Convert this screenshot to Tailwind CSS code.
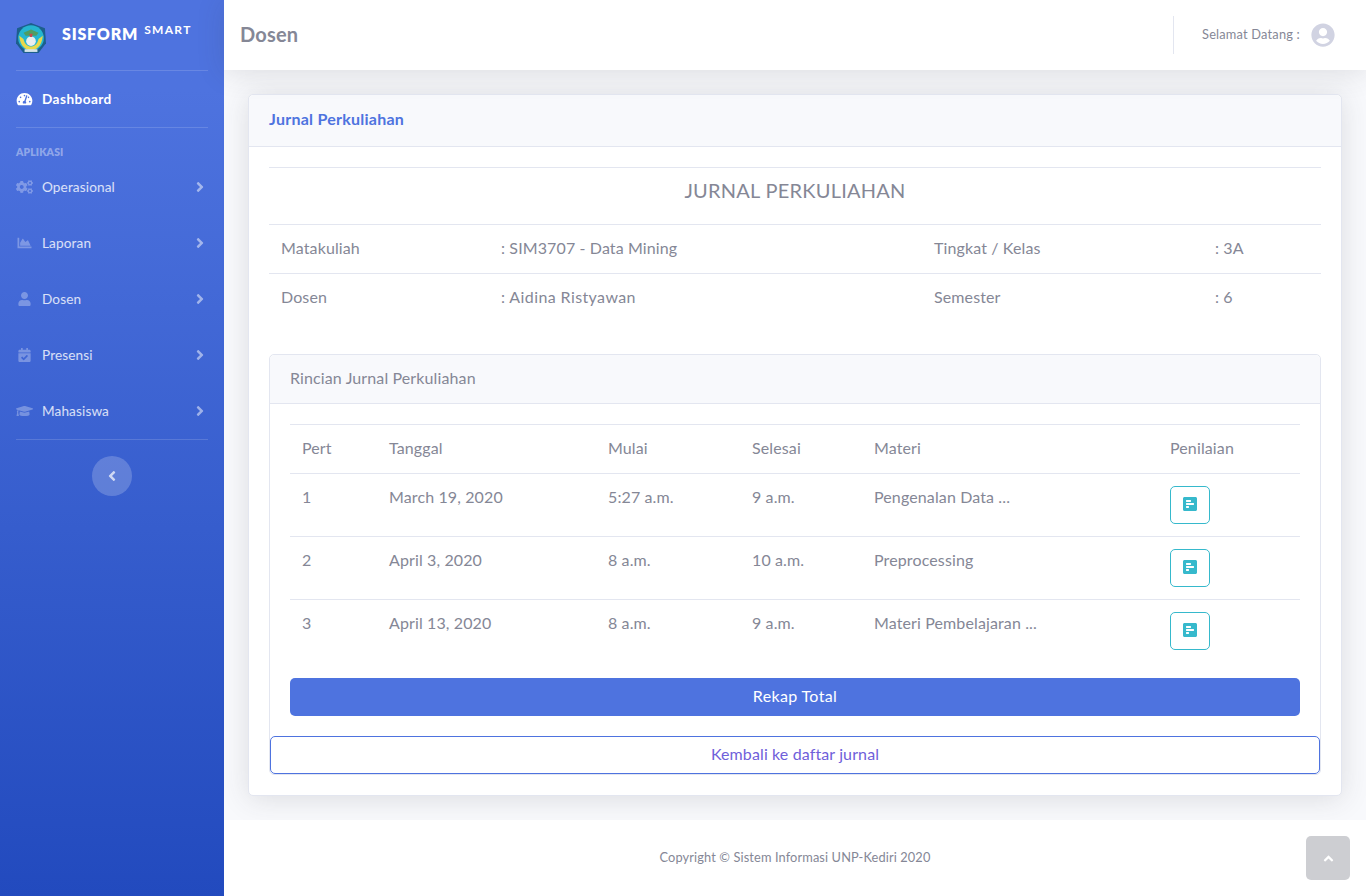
<!DOCTYPE html>
<html lang="en">
<head>
    <meta charset="UTF-8">
    <title>Dosen</title>
    <script src="https://cdn.jsdelivr.net/npm/@tailwindcss/browser@4"></script>
</head>
<body class="relative h-[896px] overflow-hidden bg-[#f8f9fc] font-['Lato','Liberation_Sans',sans-serif] text-base tracking-[0.12px] text-[#858796]">
<div class="flex h-[896px]">

    <!-- Sidebar -->
    <aside class="w-[224px] shrink-0 bg-gradient-to-b from-[#4e73df] from-10% to-[#224abe] px-4 text-[13.6px] text-white/80">
        <div class="flex h-[71px] items-center border-b border-white/15">
            <svg viewBox="2 1 28 28" class="mt-[6px] h-[30px] w-[30px] shrink-0">
                <path d="M16 1 L29 6 L30 20 L23 29 L9 29 L2 20 L3 6 Z" fill="#1c5f8c"/>
                <circle cx="16" cy="15" r="12" fill="#25b5d0"/>
                <path d="M5 13 C6 24 12 26 16 27 C20 26 26 24 27 13 L23 16 C22 21 19 23 16 23 C13 23 10 21 9 16 Z" fill="#e8d84a"/>
                <circle cx="16" cy="18" r="4.5" fill="#e8eeee"/>
                <path d="M9 10 L16 7 L23 10 L21 13 L11 13 Z" fill="#4f9d63"/>
                <path d="M14.5 11 L17.5 11 L17 14 L15 14 Z" fill="#c9474c"/>
                <rect x="10" y="25.5" width="12" height="2.5" fill="#d5e4ea"/>
            </svg>
            <span class="mb-[3px] ml-4 text-[16px] font-extrabold tracking-[0.8px] text-white">SISFORM</span>
            <span class="mb-[10px] ml-[6px] text-[12px] font-bold tracking-[1.3px] text-white">SMART</span>
        </div>

        <a class="flex h-[57px] items-center border-b border-white/15 font-bold tracking-[0.45px] text-white">
            <svg viewBox="0 0 576 512" class="mr-[9px] h-[14px] w-[17px] shrink-0 fill-white"><path d="M288 32C128.94 32 0 160.94 0 320c0 52.8 14.25 102.26 39.06 144.8 5.61 9.62 16.3 15.2 27.44 15.2h443c11.14 0 21.83-5.58 27.44-15.2C561.75 422.26 576 372.8 576 320c0-159.06-128.94-288-288-288zm0 64c14.71 0 26.58 10.13 30.32 23.65-1.11 2.26-2.64 4.23-3.45 6.67l-9.22 27.67c-5.13 3.49-10.97 6.01-17.64 6.01-17.67 0-32-14.33-32-32S270.33 96 288 96zM96 384c-17.67 0-32-14.33-32-32s14.33-32 32-32 32 14.33 32 32-14.33 32-32 32zm48-160c-17.67 0-32-14.33-32-32s14.33-32 32-32 32 14.33 32 32-14.33 32-32 32zm246.77-72.41l-61.33 184C343.13 347.33 352 364.54 352 384c0 11.72-3.38 22.55-8.88 32H232.88c-5.5-9.45-8.88-20.28-8.88-32 0-33.94 26.5-61.43 59.9-63.59l61.34-184.01c4.17-12.56 17.73-19.45 30.36-15.17 12.57 4.19 19.35 17.79 15.17 30.36zm14.66 57.2l15.52-46.55c3.47-1.29 7.13-2.23 11.05-2.23 17.67 0 32 14.33 32 32s-14.33 32-32 32c-11.38-.01-20.89-6.28-26.57-15.22zM480 384c-17.67 0-32-14.33-32-32s14.33-32 32-32 32 14.33 32 32-14.33 32-32 32z"/></svg>
            Dashboard
        </a>

        <div class="flex h-[31px] items-end text-[10.4px] leading-[14px] font-extrabold text-white/40">APLIKASI</div>

        <a class="flex h-[56px] items-center pr-1">
            <svg viewBox="0 0 640 512" class="mr-[9px] h-[14px] w-[17px] shrink-0 fill-white/30"><path d="M512.1 191l-8.2 14.3c-3 5.3-9.4 7.5-15.1 5.4-11.8-4.4-22.6-10.7-32.1-18.6-4.6-3.8-5.8-10.5-2.8-15.7l8.2-14.3c-6.9-8-12.3-17.3-15.9-27.4h-16.5c-6 0-11.2-4.3-12.2-10.3-2-12-2.1-24.6 0-37.1 1-6 6.2-10.4 12.2-10.4h16.5c3.6-10.1 9-19.4 15.9-27.4l-8.2-14.3c-3-5.2-1.9-11.9 2.8-15.7 9.5-7.9 20.4-14.2 32.1-18.6 5.7-2.1 12.1.1 15.1 5.4l8.2 14.3c10.5-1.9 21.2-1.9 31.7 0L552 6.3c3-5.3 9.4-7.5 15.1-5.4 11.8 4.4 22.6 10.7 32.1 18.6 4.6 3.8 5.8 10.5 2.8 15.7l-8.2 14.3c6.9 8 12.3 17.3 15.9 27.4h16.5c6 0 11.2 4.3 12.2 10.3 2 12 2.1 24.6 0 37.1-1 6-6.2 10.4-12.2 10.4h-16.5c-3.6 10.1-9 19.4-15.9 27.4l8.2 14.3c3 5.2 1.9 11.9-2.8 15.7-9.5 7.9-20.4 14.2-32.1 18.6-5.7 2.1-12.1-.1-15.1-5.4l-8.2-14.3c-10.4 1.9-21.2 1.9-31.7 0zm-10.5-58.8c38.5 29.6 82.4-14.3 52.8-52.8-38.5-29.7-82.4 14.3-52.8 52.8zM386.3 286.1l33.7 16.8c10.1 5.8 14.5 18.1 10.5 29.1-8.9 24.2-26.4 46.4-42.6 65.8-7.4 8.9-20.2 11.1-30.3 5.3l-29.1-16.8c-16 13.7-34.6 24.6-54.9 31.7v33.6c0 11.6-8.3 21.6-19.7 23.6-24.6 4.2-50.4 4.4-75.9 0-11.5-2-20-11.9-20-23.6V418c-20.3-7.2-38.9-18-54.9-31.7L74 403c-10 5.8-22.9 3.6-30.3-5.3-16.2-19.4-33.3-41.6-42.2-65.7-4-10.9.4-23.2 10.5-29.1l33.3-16.8c-3.9-20.9-3.9-42.4 0-63.4L12 205.8c-10.1-5.8-14.6-18.1-10.5-29 8.9-24.2 26-46.4 42.2-65.8 7.4-8.9 20.2-11.1 30.3-5.3l29.1 16.8c16-13.7 34.6-24.6 54.9-31.7V57.1c0-11.5 8.2-21.5 19.6-23.5 24.6-4.2 50.5-4.4 76-.1 11.5 2 20 11.9 20 23.6v33.6c20.3 7.2 38.9 18 54.9 31.7l29.1-16.8c10-5.8 22.9-3.6 30.3 5.3 16.2 19.4 33.2 41.6 42.1 65.8 4 10.9.1 23.2-10 29.1l-33.7 16.8c3.9 21 3.9 42.5 0 63.5zm-117.6 21.1c59.2-77-28.7-164.9-105.7-105.7-59.2 77 28.7 164.9 105.7 105.7zm243.4 182.7l-8.2 14.3c-3 5.3-9.4 7.5-15.1 5.4-11.8-4.4-22.6-10.7-32.1-18.6-4.6-3.8-5.8-10.5-2.8-15.7l8.2-14.3c-6.9-8-12.3-17.3-15.9-27.4h-16.5c-6 0-11.2-4.3-12.2-10.3-2-12-2.1-24.6 0-37.1 1-6 6.2-10.4 12.2-10.4h16.5c3.6-10.1 9-19.4 15.9-27.4l-8.2-14.3c-3-5.2-1.9-11.9 2.8-15.7 9.5-7.9 20.4-14.2 32.1-18.6 5.7-2.1 12.1.1 15.1 5.4l8.2 14.3c10.5-1.9 21.2-1.9 31.7 0l8.2-14.3c3-5.3 9.4-7.5 15.1-5.4 11.8 4.4 22.6 10.7 32.1 18.6 4.6 3.8 5.8 10.5 2.8 15.7l-8.2 14.3c6.9 8 12.3 17.3 15.9 27.4h16.5c6 0 11.2 4.3 12.2 10.3 2 12 2.1 24.6 0 37.1-1 6-6.2 10.4-12.2 10.4h-16.5c-3.6 10.1-9 19.4-15.9 27.4l8.2 14.3c3 5.2 1.9 11.9-2.8 15.7-9.5 7.9-20.4 14.2-32.1 18.6-5.7 2.1-12.1-.1-15.1-5.4l-8.2-14.3c-10.4 1.9-21.2 1.9-31.7 0zM501.6 431c38.5 29.6 82.4-14.3 52.8-52.8-38.5-29.6-82.4 14.3-52.8 52.8z"/></svg>
            <span class="flex-1">Operasional</span>
            <svg viewBox="0 0 256 512" class="h-4 w-2 fill-white/50"><path d="M224.3 273l-136 136c-9.4 9.4-24.6 9.4-33.9 0l-22.6-22.6c-9.4-9.4-9.4-24.6 0-33.9l96.4-96.4-96.4-96.4c-9.4-9.4-9.4-24.6 0-33.9L54.3 103c9.4-9.4 24.6-9.4 33.9 0l136 136c9.5 9.4 9.5 24.6.1 34z"/></svg>
        </a>
        <a class="flex h-[56px] items-center pr-1">
            <svg viewBox="0 0 512 512" class="mr-[9px] h-[14px] w-[17px] shrink-0 fill-white/30"><path d="M500 384c6.6 0 12 5.4 12 12v40c0 6.6-5.4 12-12 12H12c-6.6 0-12-5.4-12-12V76c0-6.6 5.4-12 12-12h40c6.6 0 12 5.4 12 12v308h436zM372.7 159.5L288 216l-85.3-113.7c-5.1-6.8-15.5-6.3-19.9 1L96 248v104h384l-89.9-187.8c-3.2-6.5-11.4-8.7-17.4-4.7z"/></svg>
            <span class="flex-1">Laporan</span>
            <svg viewBox="0 0 256 512" class="h-4 w-2 fill-white/50"><path d="M224.3 273l-136 136c-9.4 9.4-24.6 9.4-33.9 0l-22.6-22.6c-9.4-9.4-9.4-24.6 0-33.9l96.4-96.4-96.4-96.4c-9.4-9.4-9.4-24.6 0-33.9L54.3 103c9.4-9.4 24.6-9.4 33.9 0l136 136c9.5 9.4 9.5 24.6.1 34z"/></svg>
        </a>
        <a class="flex h-[56px] items-center pr-1">
            <svg viewBox="0 0 448 512" class="mr-[9px] h-[14px] w-[17px] shrink-0 fill-white/30"><path d="M224 256c70.7 0 128-57.3 128-128S294.7 0 224 0 96 57.3 96 128s57.3 128 128 128zm89.6 32h-16.7c-22.2 10.2-46.9 16-72.9 16s-50.6-5.8-72.9-16h-16.7C60.2 288 0 348.2 0 422.4V464c0 26.5 21.5 48 48 48h352c26.5 0 48-21.5 48-48v-41.6c0-74.2-60.2-134.4-134.4-134.4z"/></svg>
            <span class="flex-1">Dosen</span>
            <svg viewBox="0 0 256 512" class="h-4 w-2 fill-white/50"><path d="M224.3 273l-136 136c-9.4 9.4-24.6 9.4-33.9 0l-22.6-22.6c-9.4-9.4-9.4-24.6 0-33.9l96.4-96.4-96.4-96.4c-9.4-9.4-9.4-24.6 0-33.9L54.3 103c9.4-9.4 24.6-9.4 33.9 0l136 136c9.5 9.4 9.5 24.6.1 34z"/></svg>
        </a>
        <a class="flex h-[56px] items-center pr-1">
            <svg viewBox="0 0 448 512" class="mr-[9px] h-[14px] w-[17px] shrink-0 fill-white/30"><path d="M436 160H12c-6.627 0-12-5.373-12-12v-36c0-26.51 21.49-48 48-48h48V12c0-6.627 5.373-12 12-12h40c6.627 0 12 5.373 12 12v52h128V12c0-6.627 5.373-12 12-12h40c6.627 0 12 5.373 12 12v52h48c26.51 0 48 21.49 48 48v36c0 6.627-5.373 12-12 12zM12 192h424c6.627 0 12 5.373 12 12v260c0 26.51-21.49 48-48 48H48c-26.51 0-48-21.49-48-48V204c0-6.627 5.373-12 12-12zm333.296 95.947l-28.169-28.398c-4.667-4.705-12.265-4.736-16.97-.068L194.12 364.665l-45.98-46.352c-4.667-4.705-12.266-4.736-16.971-.068l-28.397 28.17c-4.705 4.667-4.736 12.265-.068 16.97l82.601 83.269c4.667 4.705 12.265 4.736 16.97.068l142.953-141.805c4.705-4.667 4.736-12.265.068-16.97z"/></svg>
            <span class="flex-1">Presensi</span>
            <svg viewBox="0 0 256 512" class="h-4 w-2 fill-white/50"><path d="M224.3 273l-136 136c-9.4 9.4-24.6 9.4-33.9 0l-22.6-22.6c-9.4-9.4-9.4-24.6 0-33.9l96.4-96.4-96.4-96.4c-9.4-9.4-9.4-24.6 0-33.9L54.3 103c9.4-9.4 24.6-9.4 33.9 0l136 136c9.5 9.4 9.5 24.6.1 34z"/></svg>
        </a>
        <a class="flex h-[56px] items-center pr-1">
            <svg viewBox="0 0 640 512" class="mr-[9px] h-[14px] w-[17px] shrink-0 fill-white/30"><path d="M622.34 153.2L343.4 67.5c-15.2-4.67-31.6-4.67-46.79 0L17.66 153.2c-23.54 7.23-23.54 38.36 0 45.59l48.63 14.94c-10.67 13.19-17.23 29.28-17.88 46.9C38.78 266.15 32 276.11 32 288c0 10.78 5.68 19.85 13.86 25.65L20.33 428.53C18.11 438.52 25.71 448 35.94 448h56.11c10.24 0 17.84-9.48 15.62-19.47L82.14 313.65C90.32 307.85 96 298.78 96 288c0-11.57-6.47-21.25-15.66-26.87.76-15.02 8.44-28.3 20.69-36.72L296.6 284.5c9.06 2.78 26.44 6.25 46.79 0l278.95-85.7c23.55-7.24 23.55-38.36 0-45.6zM352.79 315.09c-28.53 8.76-52.84 3.92-65.59 0l-145.02-44.55L128 384c0 35.35 85.96 64 192 64s192-28.65 192-64l-14.18-113.47-145.03 44.56z"/></svg>
            <span class="flex-1">Mahasiswa</span>
            <svg viewBox="0 0 256 512" class="h-4 w-2 fill-white/50"><path d="M224.3 273l-136 136c-9.4 9.4-24.6 9.4-33.9 0l-22.6-22.6c-9.4-9.4-9.4-24.6 0-33.9l96.4-96.4-96.4-96.4c-9.4-9.4-9.4-24.6 0-33.9L54.3 103c9.4-9.4 24.6-9.4 33.9 0l136 136c9.5 9.4 9.5 24.6.1 34z"/></svg>
        </a>

        <div class="border-t border-white/15 pt-4">
            <div class="mx-auto flex h-10 w-10 items-center justify-center rounded-full bg-white/20">
                <svg viewBox="0 0 256 512" class="h-4 w-2 fill-white/70"><path d="M31.7 239l136-136c9.4-9.4 24.6-9.4 33.9 0l22.6 22.6c9.4 9.4 9.4 24.6 0 33.9L127.9 256l96.4 96.4c9.4 9.4 9.4 24.6 0 33.9L201.7 409c-9.4 9.4-24.6 9.4-33.9 0l-136-136c-9.5-9.4-9.5-24.6-.1-34z"/></svg>
            </div>
        </div>
    </aside>

    <!-- Main -->
    <div class="flex min-w-0 flex-1 flex-col">
        <header class="z-10 flex h-[70px] shrink-0 items-center bg-white pl-4 pr-[31px] shadow-[0_2.4px_28px_0_rgba(58,59,69,0.15)]">
            <h1 class="flex-1 pb-[2px] text-[20px] font-bold tracking-[0.2px]">Dosen</h1>
            <div class="h-[38px] w-px bg-[#e3e6f0]"></div>
            <span class="ml-7 text-[12.8px] tracking-[0.2px]">Selamat Datang :</span>
            <svg viewBox="0 0 496 512" class="ml-[11px] h-6 w-6 fill-[#d1d3e2]"><path d="M248 8C111 8 0 119 0 256s111 248 248 248 248-111 248-248S385 8 248 8zm0 96c48.6 0 88 39.4 88 88s-39.4 88-88 88-88-39.4-88-88 39.4-88 88-88zm0 344c-58.7 0-111.3-26.6-146.5-68.2 18.8-35.4 55.6-59.8 98.5-59.8 2.4 0 4.8.4 7.1 1.1 13 4.2 26.6 6.9 40.9 6.9 14.3 0 28-2.7 40.9-6.9 2.3-.7 4.7-1.1 7.1-1.1 42.9 0 79.7 24.4 98.5 59.8C359.3 421.4 306.7 448 248 448z"/></svg>
        </header>

        <main class="flex-1 px-6 pt-6">
            <div class="h-[702px] rounded-[5px] border border-[#e3e6f0] bg-white shadow-[0_2.4px_28px_0_rgba(58,59,69,0.15)]">
                <div class="flex h-[52px] items-center rounded-t-[5px] border-b border-[#e3e6f0] bg-[#f8f9fc] px-5 pb-1 font-bold tracking-[0.25px] text-[#4e73df]">Jurnal Perkuliahan</div>
                <div class="px-5 pt-5">
                    <!-- Header info -->
                    <div class="flex h-[57px] items-center justify-center border-t border-[#e3e6f0] pb-3 text-[20px] tracking-[0.24px]">JURNAL PERKULIAHAN</div>
                    <table class="w-full table-fixed border-collapse">
                        <colgroup><col class="w-[220px]"><col class="w-[433px]"><col class="w-[281px]"><col></colgroup>
                        <tbody>
                            <tr class="h-[49px] border-t border-[#e3e6f0]">
                                <td class="px-3 pb-[3px]">Matakuliah</td><td class="px-3 pb-[3px]">: SIM3707 - Data Mining</td><td class="px-3 pb-[3px]">Tingkat / Kelas</td><td class="px-3 pb-[3px]">: 3A</td>
                            </tr>
                            <tr class="h-[49px] border-t border-[#e3e6f0]">
                                <td class="px-3 pb-[3px]">Dosen</td><td class="px-3 pb-[3px] tracking-[0.4px]">: Aidina Ristyawan</td><td class="px-3 pb-[3px]">Semester</td><td class="px-3 pb-[3px]">: 6</td>
                            </tr>
                        </tbody>
                    </table>

                    <!-- Rincian -->
                    <div class="mt-[31px] h-[421px] rounded-[5px] border border-[#e3e6f0]">
                        <div class="flex h-[49px] items-center rounded-t-[5px] border-b border-[#e3e6f0] bg-[#f8f9fc] px-5 pb-[2px]">Rincian Jurnal Perkuliahan</div>
                        <div class="px-5 pt-5">
                            <table class="w-full table-fixed border-collapse">
                                <colgroup><col class="w-[87px]"><col class="w-[219px]"><col class="w-[144px]"><col class="w-[122px]"><col class="w-[296px]"><col></colgroup>
                                <thead>
                                    <tr class="h-[49px] border-t border-[#e3e6f0] text-left">
                                        <th class="px-3 pb-[2px] font-normal">Pert</th><th class="px-3 pb-[2px] font-normal">Tanggal</th><th class="px-3 pb-[2px] font-normal">Mulai</th><th class="px-3 pb-[2px] font-normal">Selesai</th><th class="px-3 pb-[2px] font-normal">Materi</th><th class="px-3 pb-[2px] font-normal">Penilaian</th>
                                    </tr>
                                </thead>
                                <tbody>
                                    <tr class="h-[63px] border-t border-[#e3e6f0] align-top">
                                        <td class="px-3 pt-[11px]">1</td><td class="px-3 pt-[11px]">March 19, 2020</td><td class="px-3 pt-[11px]">5:27 a.m.</td><td class="px-3 pt-[11px]">9 a.m.</td><td class="px-3 pt-[11px]">Pengenalan Data ...</td>
                                        <td class="p-3">
                                            <button class="flex h-[38px] w-10 items-center justify-center rounded-[5px] border border-[#36b9cc]">
                                                <svg viewBox="0 0 448 512" class="mb-px h-4 w-[14px] fill-[#36b9cc]"><path d="M448 432V80c0-26.5-21.5-48-48-48H48C21.5 32 0 53.5 0 80v352c0 26.5 21.5 48 48 48h352c26.5 0 48-21.5 48-48zM112 192c-8.84 0-16-7.16-16-16v-32c0-8.84 7.16-16 16-16h128c8.84 0 16 7.16 16 16v32c0 8.84-7.16 16-16 16H112zm0 96c-8.84 0-16-7.16-16-16v-32c0-8.84 7.16-16 16-16h224c8.84 0 16 7.16 16 16v32c0 8.84-7.16 16-16 16H112zm0 96c-8.84 0-16-7.16-16-16v-32c0-8.84 7.16-16 16-16h64c8.84 0 16 7.16 16 16v32c0 8.84-7.16 16-16 16h-64z"/></svg>
                                            </button>
                                        </td>
                                    </tr>
                                    <tr class="h-[63px] border-t border-[#e3e6f0] align-top">
                                        <td class="px-3 pt-[11px]">2</td><td class="px-3 pt-[11px]">April 3, 2020</td><td class="px-3 pt-[11px]">8 a.m.</td><td class="px-3 pt-[11px]">10 a.m.</td><td class="px-3 pt-[11px]">Preprocessing</td>
                                        <td class="p-3">
                                            <button class="flex h-[38px] w-10 items-center justify-center rounded-[5px] border border-[#36b9cc]">
                                                <svg viewBox="0 0 448 512" class="mb-px h-4 w-[14px] fill-[#36b9cc]"><path d="M448 432V80c0-26.5-21.5-48-48-48H48C21.5 32 0 53.5 0 80v352c0 26.5 21.5 48 48 48h352c26.5 0 48-21.5 48-48zM112 192c-8.84 0-16-7.16-16-16v-32c0-8.84 7.16-16 16-16h128c8.84 0 16 7.16 16 16v32c0 8.84-7.16 16-16 16H112zm0 96c-8.84 0-16-7.16-16-16v-32c0-8.84 7.16-16 16-16h224c8.84 0 16 7.16 16 16v32c0 8.84-7.16 16-16 16H112zm0 96c-8.84 0-16-7.16-16-16v-32c0-8.84 7.16-16 16-16h64c8.84 0 16 7.16 16 16v32c0 8.84-7.16 16-16 16h-64z"/></svg>
                                            </button>
                                        </td>
                                    </tr>
                                    <tr class="h-[63px] border-t border-[#e3e6f0] align-top">
                                        <td class="px-3 pt-[11px]">3</td><td class="px-3 pt-[11px]">April 13, 2020</td><td class="px-3 pt-[11px]">8 a.m.</td><td class="px-3 pt-[11px]">9 a.m.</td><td class="px-3 pt-[11px]">Materi Pembelajaran ...</td>
                                        <td class="p-3">
                                            <button class="flex h-[38px] w-10 items-center justify-center rounded-[5px] border border-[#36b9cc]">
                                                <svg viewBox="0 0 448 512" class="mb-px h-4 w-[14px] fill-[#36b9cc]"><path d="M448 432V80c0-26.5-21.5-48-48-48H48C21.5 32 0 53.5 0 80v352c0 26.5 21.5 48 48 48h352c26.5 0 48-21.5 48-48zM112 192c-8.84 0-16-7.16-16-16v-32c0-8.84 7.16-16 16-16h128c8.84 0 16 7.16 16 16v32c0 8.84-7.16 16-16 16H112zm0 96c-8.84 0-16-7.16-16-16v-32c0-8.84 7.16-16 16-16h224c8.84 0 16 7.16 16 16v32c0 8.84-7.16 16-16 16H112zm0 96c-8.84 0-16-7.16-16-16v-32c0-8.84 7.16-16 16-16h64c8.84 0 16 7.16 16 16v32c0 8.84-7.16 16-16 16h-64z"/></svg>
                                            </button>
                                        </td>
                                    </tr>
                                </tbody>
                            </table>
                            <button class="mt-4 flex h-[38px] w-full items-center justify-center rounded-[5px] bg-[#4e73df] pb-[2px] tracking-[0.35px] text-white">Rekap Total</button>
                        </div>
                        <button class="mt-5 flex h-[38px] w-full items-center justify-center rounded-[5px] border border-[#4e73df] bg-white pb-[2px] text-[#6f60da]">Kembali ke daftar jurnal</button>
                    </div>
                </div>
            </div>
        </main>

        <footer class="flex h-[76px] shrink-0 items-center justify-center bg-white text-[12.8px]">Copyright © Sistem Informasi UNP-Kediri 2020</footer>
    </div>
</div>

<!-- Scroll to top -->
<a class="absolute bottom-4 right-4 flex h-11 w-11 items-center justify-center rounded-[5px] bg-[#5a5c69]/30">
    <svg viewBox="0 0 320 512" class="h-[15px] w-[11px] fill-white"><path d="M177 159.7l136 136c9.4 9.4 9.4 24.6 0 33.9l-22.6 22.6c-9.4 9.4-24.6 9.4-33.9 0L160 255.9l-96.4 96.4c-9.4 9.4-24.6 9.4-33.9 0L7 329.7c-9.4-9.4-9.4-24.6 0-33.9l136-136c9.4-9.5 24.6-9.5 34-.1z"/></svg>
</a>
</body>
</html>
